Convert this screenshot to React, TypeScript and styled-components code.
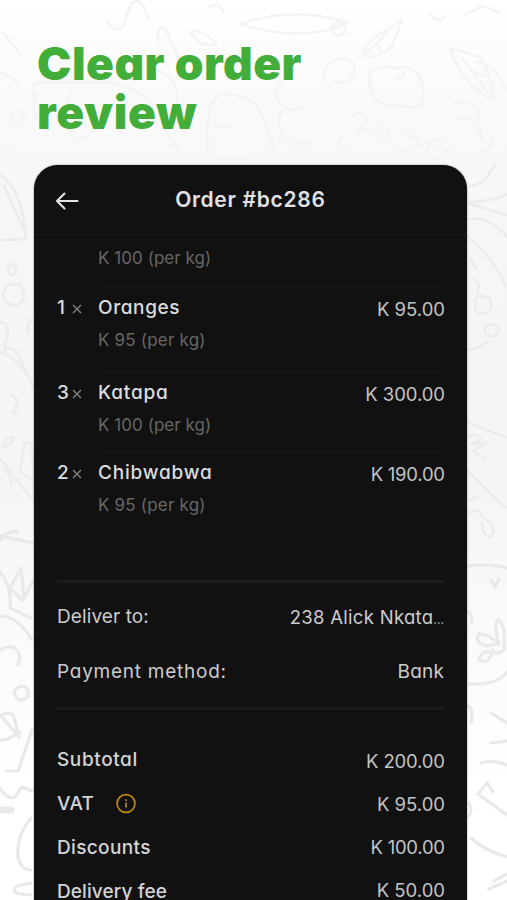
import React from "react";
import styled, { createGlobalStyle } from "styled-components";

const GlobalStyle = createGlobalStyle`
  * { box-sizing: border-box; }
  body { margin: 0; background: #fff; }
`;

const Page = styled.main`
  position: relative;
  height: 900px;
  overflow: hidden;
  padding: 38.5px 40px 0 34px;
  background: linear-gradient(#fff 0, #fafafa 90px, #f6f6f6 230px, #f5f5f5 480px, #fff 790px);
  font-family: Inter, "Liberation Sans", sans-serif;
  font-feature-settings: "cv11";
`;

const Doodles = styled.svg`
  position: absolute;
  inset: 0;
  fill: none;
  stroke-linecap: round;
  stroke-linejoin: round;
  filter: blur(0.6px);
`;

/* Tracked text; the negative margin drops the gap after the last letter. */
const Text = styled.span<{ $track?: number }>`
  display: inline-block;
  white-space: pre;
  letter-spacing: ${(p) => p.$track ?? 0}px;
  margin-right: ${(p) => -(p.$track ?? 0)}px;
`;

const Headline = styled.h1`
  position: relative;
  margin: 0 0 0 3px;
  height: 126px;
  font-size: 46px;
  line-height: 49px;
  font-weight: 900;
  color: #42ae39;
`;

const Card = styled.section`
  position: relative;
  width: 433px;
  height: 760px;
  border-radius: 24px 24px 0 0;
  background: #111;
  box-shadow: 0 0 1.5px #555;
`;

const Header = styled.header`
  display: grid;
  grid-template-columns: 40px 1fr 40px;
  align-items: center;
  height: 70px;
  padding: 2px 17px 0 16px;
  border-bottom: 1px solid #1b1b1b;
`;

const BackIcon = styled.svg`
  width: 34px;
  height: 28px;
  fill: none;
  stroke: #e4e4e4;
  stroke-width: 2.1;
  stroke-linecap: round;
  stroke-linejoin: round;
`;

const Title = styled.h2`
  margin: 0;
  text-align: center;
  font-size: 21px;
  line-height: 26px;
  font-weight: 600;
  color: #e2e2e4;
`;

const Items = styled.div`
  padding: 0 21px 0 23px;
`;

const Item = styled.div<{ $height: number }>`
  display: grid;
  grid-template-columns: 41px 1fr;
  height: ${(p) => p.$height}px;
`;

const Quantity = styled.div`
  display: flex;
  align-items: baseline;
  padding-top: 10.5px;
  font-size: 19px;
  line-height: 24px;
  font-weight: 500;
  color: #dcdcdc;
`;

const QuantityNumber = styled.span`
  width: 14px;
`;

const Times = styled.svg`
  width: 10px;
  height: 10px;
  margin: 0 0 -1px 1px;
  stroke: #858585;
  stroke-width: 1.3;
`;

const Details = styled.div<{ $rule?: boolean }>`
  display: flex;
  justify-content: space-between;
  align-items: flex-start;
  border-top: 1px solid ${(p) => (p.$rule ? "#1a1a1a" : "transparent")};
  padding-top: ${(p) => (p.$rule ? 9.5 : 10)}px;
`;

const Name = styled.div`
  font-size: 19px;
  line-height: 24px;
  font-weight: 500;
  color: #dcdcdc;
`;

const UnitPrice = styled.div<{ $first?: boolean }>`
  margin-top: ${(p) => (p.$first ? 0 : 8)}px;
  font-size: 17px;
  line-height: 24px;
  color: #666;
`;

const Price = styled.div`
  margin: 1px 1px 0 0;
  font-size: 18.5px;
  line-height: 24px;
  color: #c2c3c5;
`;

const Delivery = styled.div`
  display: flex;
  flex-direction: column;
  gap: 30.5px;
  height: 130px;
  margin: 0 23px;
  padding-top: 22.5px;
  border-top: 3px solid #1c1c1c;
  border-bottom: 3px solid #1c1c1c;
`;

const Line = styled.div`
  display: flex;
  justify-content: space-between;
  height: 24px;
  font-size: 19px;
  line-height: 24px;
  color: #cbccce;
`;

const Address = styled.span`
  font-size: 18.5px;
`;

const Ellipsis = styled.span`
  font-size: 14px;
  letter-spacing: -0.4px;
  color: #a2a2a2;
`;

const Totals = styled.div`
  display: flex;
  flex-direction: column;
  gap: 20px;
  padding: 38px 21px 0 23px;
`;

const TotalLabel = styled.span`
  display: flex;
  align-items: center;
  gap: 21.5px;
  font-weight: 500;
  color: #d4d4d6;
`;

const TotalAmount = styled.span<{ $shift: number }>`
  margin: ${(p) => p.$shift}px 1px 0 0;
  font-size: 18.5px;
  color: #c2c3c5;
`;

const InfoIcon = styled.svg`
  width: 22px;
  height: 22px;
  fill: none;
  stroke: #bd8b0c;
  stroke-width: 1.7;
`;

type Entry = {
  qty?: string;
  name?: string;
  nameTrack?: number;
  unit: string;
  unitTrack: number;
  price?: string;
  priceTrack?: number;
  height: number;
};

const entries: Entry[] = [
  { unit: "K 100 (per kg)", unitTrack: 0.05, height: 51 },
  { qty: "1", name: "Oranges", nameTrack: 0.6, unit: "K 95 (per kg)", unitTrack: 0.2, price: "K 95.00", height: 85 },
  { qty: "3", name: "Katapa", nameTrack: 0.85, unit: "K 100 (per kg)", unitTrack: 0.05, price: "K 300.00", priceTrack: -0.05, height: 80 },
  { qty: "2", name: "Chibwabwa", nameTrack: 0.8, unit: "K 95 (per kg)", unitTrack: 0.2, price: "K 190.00", priceTrack: -0.25, height: 129 },
];

const totals = [
  { label: "Subtotal", track: 0.6, amount: "K 200.00", amountTrack: -0.15, shift: 1 },
  { label: "VAT", track: 0.3, amount: "K 95.00", amountTrack: 0, shift: 0, info: true },
  { label: "Discounts", track: 0.35, amount: "K 100.00", amountTrack: -0.25, shift: -1 },
  { label: "Delivery fee", track: 0.1, amount: "K 50.00", amountTrack: 0, shift: -2 },
];

const Pattern = () => (
  <Doodles width="507" height="900" viewBox="0 0 507 900">
    <g stroke="#f4f4f4" strokeWidth="2.6">
      <path d="M108 22q6 10 14 6l9-24q7-6 12 2l6 12M240 24q40-14 80-8l28 6q-42 22-108 2M334 24q10-4 11 4t-9 8q-6-5-2-12M402 20l-22 14q-18 10-16 22 16 4 28-10zM364 56l24-24M376 42l5 9M158 44q-2-22 8-14l14 30M190 32q14-4 26 12-18 4-26-12M2 32l22 26M210 7q8-6 14 6M430 14q8 10 16 2M466 14l16-8 18 6" />
      <path d="M36 100q-10-18 10-18l60 0q30 4 46 22M36 96q-8 20 12 34M70 92q-8 40 6 48 18-4 22-18M118 100q40 12 62 54M158 70q24 10 18 38M208 154q-4-60 16-60 30 0 38 22l16 42M214 127h20M212 158h36" />
      <path d="M324 82q-2-20 18-24 16 4 12 16-6 14-20 6M282 82q-12 14 0 24 12 8 20 0M370 72q14-8 24-4 24-4 28 16 8 28-18 22-40 2-34-34M396 76q6 8 8-4M350 118q14-12 18 2l-12 16M282 110q-8 16 4 28 14 10 26 4M344 134q-10 14 4 18M374 132q6-8 14-2 4 12-6 12M406 134q16 6 10 14-14 6-22-4" />
      <path d="M450 48l28 8q12 10 16 44-32-14-44-52M462 58l32 42M476 72l10 4M452 104q18-6 26 8l4 28M460 118q20 0 18 18M474 62q20 0 33 28M442 138q-14 2-14 16 12 12 16-6l8 10M496 134l-10 18M12 114q2-6 12 0 2 12-6 12-9-2-6-12M0 144q18 10 32 25M0 72l18 10" />
    </g>
    <g stroke="#ececec" strokeWidth="2.6">
      <path d="M0 175q22 12 26 64l-24 1M4 186l22 48M8 267q4-5 8 0 2 8-4 8-5-2-4-8M14 284q-10 1-11 10t10 11q12 0 11-11t-10-10M0 322q8-1 8 12l-4 16q10-4 14 4l17 36M0 352q20 6 34 36M33 318q-7 6-5 16M12 395l6 6-5 11 5 2M0 448q12-2 14-10-8-3-10 8M24 444l-4 28 13 8M24 444l8-2 2 60M1 460l30 38M4 470q8 4 7 14" />
      <path d="M470 186q14-2 20-14l6-8M467 202q25 0 40-8M467 203l40 12M468 219q24-2 39 18M467 236q30 26 38 50M470 258l6 10M470 280q12-2 7 13M475 299q7-6 15 0 4 12-4 14-8 2-11-4v-10M485 326q8-4 14 1-2 12-8 9-8-1-6-9M467 350q12-2 20-8M467 422l40 16M469 436q7-3 12 3l-10 5 16-1-14 8 12 7M467 470q24 26 40 38M470 500l8-4M470 514q4-8 10-1t8 8q10 10 2 16-8-2-8-15" />
    </g>
    <g stroke="#e9e9e9" strokeWidth="3.2">
      <path d="M0 536l34 7M0 540q8-10 18-8M0 572q12 14 10 36l21 10M22 600l-12-12 11-20 3 30 9-17M0 616q18 0 32 24M0 650q16-9 20 7l-2 8M14 692q5-8 12-5 5 8-1 12-9 4-11-7M0 716q10-6 14 1l5 20M3 718l15 18M0 740q10 0 20-8M32 730l-14 41H7M0 789q8 11 15 8l7-10 10 4M31 818q-15 18-13 39 3 13 13 13M31 883l-14 3q-7 5 3 8l11 1" />
      <path strokeWidth="7" d="M0 810h11" />
      <path d="M467 566q22-3 40 2M491 580l4 7 4-8M469 612q5 7 2 10M479 634q-6 8 8 12l12-2M479 634q10 0 20 10M490 652q-8-2-11 7 9 7 12-5M499 644q-6-20-1-24 8 4 6 30-8 6-12 0M467 684q30 2 40-12M467 706q7 1 4 17M491 713l16 10M491 743l16-2M481 763q10-4 26 2M487 783l-9 11 29 21M487 783l6 9M469 803q4 6 0 13M471 838q12 12 36 19M494 881l13-7M489 889l18-8" />
    </g>
  </Doodles>
);

export default function App() {
  return (
    <>
      <GlobalStyle />
      <Page>
        <Pattern />
        <Headline>
          <Text $track={0.5}>Clear order</Text>
          <br />
          <Text $track={0.7}>review</Text>
        </Headline>
        <Card>
          <Header>
            <BackIcon viewBox="0 0 34 28">
              <path d="M27.500 15H7M14.500 7.500L7 15l7.500 7.500" />
            </BackIcon>
            <Title>
              <Text $track={0.7}>Order #bc286</Text>
            </Title>
          </Header>
          <Items>
            {entries.map((e, i) => (
              <Item key={i} $height={e.height}>
                <Quantity>
                  {e.qty && (
                    <>
                      <QuantityNumber>{e.qty}</QuantityNumber>
                      <Times viewBox="0 0 10 10">
                        <path d="M1 1l8 8M9 1l-8 8" />
                      </Times>
                    </>
                  )}
                </Quantity>
                <Details $rule={i > 0}>
                  <div>
                    {e.name && (
                      <Name>
                        <Text $track={e.nameTrack}>{e.name}</Text>
                      </Name>
                    )}
                    <UnitPrice $first={!e.name}>
                      <Text $track={e.unitTrack}>{e.unit}</Text>
                    </UnitPrice>
                  </div>
                  {e.price && (
                    <Price>
                      <Text $track={e.priceTrack}>{e.price}</Text>
                    </Price>
                  )}
                </Details>
              </Item>
            ))}
          </Items>
          <Delivery>
            <Line>
              <Text $track={0.1}>Deliver to:</Text>
              <Address>
                <Text $track={0.3}>238 Alick Nkata</Text>
                <Ellipsis>...</Ellipsis>
              </Address>
            </Line>
            <Line>
              <Text $track={0.75}>Payment method:</Text>
              <Text $track={0.25}>Bank</Text>
            </Line>
          </Delivery>
          <Totals>
            {totals.map((t) => (
              <Line key={t.label}>
                <TotalLabel>
                  <Text $track={t.track}>{t.label}</Text>
                  {t.info && (
                    <InfoIcon viewBox="0 0 22 22">
                      <circle cx="11" cy="10.500" r="8.900" />
                      <path d="M11 9.500v5M11 6.200v1.800" />
                    </InfoIcon>
                  )}
                </TotalLabel>
                <TotalAmount $shift={t.shift}>
                  <Text $track={t.amountTrack}>{t.amount}</Text>
                </TotalAmount>
              </Line>
            ))}
          </Totals>
        </Card>
      </Page>
    </>
  );
}
